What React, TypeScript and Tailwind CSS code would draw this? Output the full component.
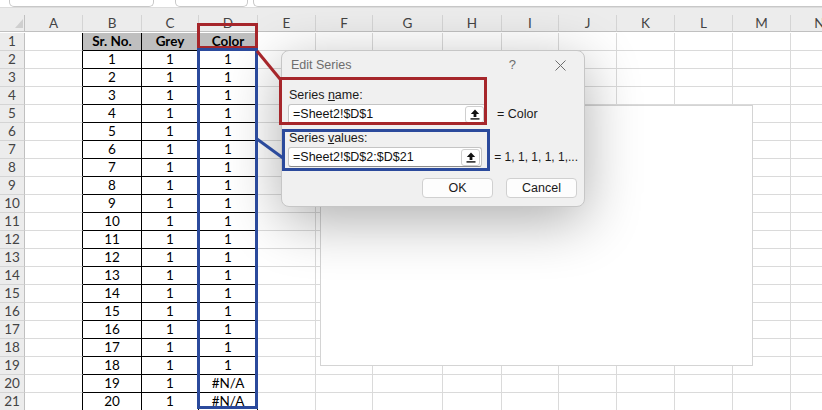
const COLS = ['A', 'B', 'C', 'D', 'E', 'F', 'G', 'H', 'I', 'J', 'K', 'L', 'M', 'N'];
const ROWS = Array.from({ length: 21 }, (_, i) => i + 1);

function cellValue(r: number, c: string) {
  if (r === 1) {
    if (c === 'B') return 'Sr. No.';
    if (c === 'C') return 'Grey';
    if (c === 'D') return 'Color';
    return '';
  }
  if (c === 'B') return String(r - 1);
  if (c === 'C') return '1';
  if (c === 'D') return r - 1 > 18 ? '#N/A' : '1';
  return '';
}

function cellClass(r: number, c: string) {
  if (c === 'B' || c === 'C' || c === 'D') {
    return r === 1
      ? 'flex items-center justify-center border-r border-b border-black bg-[#bfbfbf] font-bold'
      : 'flex items-center justify-center border-r border-b border-black bg-white';
  }
  if (c === 'A') return 'border-r border-b border-r-black border-b-[#dadada]';
  if (r === 1 && (c === 'G' || c === 'H')) return 'border-r border-b border-r-[#dadada] border-b-[#3a3a3a]';
  return 'border-r border-b border-[#dadada]';
}

function UploadIcon() {
  return (
    <svg width="10" height="11" viewBox="0 0 10 11">
      <path d="M5 0.5 L0.8 5 H3.6 V8 H6.4 V5 H9.2 Z" fill="#111" />
      <rect x="0.5" y="9.2" width="9" height="1.4" fill="#111" />
    </svg>
  );
}

function RefInput({ value }: { value: string }) {
  return (
    <div className="flex h-[20px] w-[198px] items-center rounded-[3px] border border-[#c4c4c4] border-b-[#8a8a8a] bg-white">
      <span className="flex-1 pl-[4px] text-[12.5px] leading-[18px] text-[#111]">{value}</span>
      <div className="mr-[1px] flex h-[17px] w-[19px] items-center justify-center rounded-[3px] border border-[#cfcfcf] bg-white">
        <UploadIcon />
      </div>
    </div>
  );
}

export default function App() {
  return (
    <div
      className="relative h-[410px] w-[822px] overflow-hidden bg-white text-black"
      style={{ fontFamily: 'Lato, "Liberation Sans", sans-serif' }}
    >
      {/* formula bar remnants */}
      <div className="flex h-[7px] items-end">
        <div className="ml-[9px] h-[7px] w-[145px] rounded-b-[5px] border border-t-0 border-[#c8c8c8]" />
        <div className="ml-[21px] h-[7px] w-[73px] rounded-b-[5px] border border-t-0 border-[#c8c8c8]" />
        <div className="ml-[5px] h-[7px] flex-1 rounded-bl-[5px] border border-t-0 border-r-0 border-[#c8c8c8]" />
      </div>
      <div className="h-[8px] border-t border-[#dcdcdc] bg-[#ececec]" />

      {/* sheet */}
      <div className="grid w-[849px] grid-cols-[25px_58px_59px_57px_59px_58px_57px_70px_59px_57px_58px_58px_58px_58px_58px] auto-rows-[18px] text-[13.5px]">
        <div className="relative h-[17px] border-r border-b border-[#c0c0c0] bg-[#ececec]">
          <svg className="absolute left-0 top-0" width="25" height="17">
            <polygon points="15,13 23,13 23,4" fill="#cfcfcf" />
          </svg>
        </div>
        {COLS.map((c) => (
          <div
            key={c}
            className="flex h-[17px] items-center justify-center border-r border-b border-r-[#d4d4d4] border-b-[#c0c0c0] bg-[#ececec] text-[13.5px] text-[#444]"
          >
            {c}
          </div>
        ))}
        {ROWS.map((r) => (
          <div key={r} className="contents">
            <div className="flex items-center justify-center border-r border-b border-r-[#c0c0c0] border-b-[#d4d4d4] bg-[#ececec] text-[#444]">
              {r}
            </div>
            {COLS.map((c) => (
              <div key={c} className={cellClass(r, c)}>
                {cellValue(r, c)}
              </div>
            ))}
          </div>
        ))}
      </div>

      {/* chart object */}
      <div className="absolute left-[320px] top-[105px] h-[261px] w-[433px] border border-[#d4d4d4] bg-white" />

      {/* Edit Series dialog */}
      <div
        className="absolute left-[281px] top-[50px] h-[157px] w-[304px] rounded-[8px] border border-[#c6c6c6] bg-[#f0f0f0] shadow-[0_14px_56px_rgba(0,0,0,0.32)]"
        style={{ fontFamily: '"Liberation Sans", Arial, sans-serif' }}
      >
        <div className="flex h-[28px] items-center pl-[9px] text-[12.5px] text-[#6d6d6d]">
          <span className="flex-1">Edit Series</span>
          <span className="mr-[39px] text-[13px]">?</span>
          <svg className="mr-[18px]" width="11" height="11" viewBox="0 0 11 11">
            <path d="M0.5 0.5 L10.5 10.5 M10.5 0.5 L0.5 10.5" stroke="#6d6d6d" strokeWidth="1" />
          </svg>
        </div>
        <div className="px-[6px] text-[12.5px] text-[#1a1a1a]">
          <div className="mt-[9px] h-[14px] pl-[1px] leading-[14px]">
            Series <span className="underline">n</span>ame:
          </div>
          <div className="mt-[2px] flex items-center">
            <RefInput value="=Sheet2!$D$1" />
            <span className="ml-[11px] whitespace-nowrap">= Color</span>
          </div>
          <div className="mt-[7px] h-[14px] pl-[1px] leading-[14px]">
            Series <span className="underline">v</span>alues:
          </div>
          <div className="mt-[2px] flex items-center">
            <RefInput value="=Sheet2!$D$2:$D$21" />
            <span className="ml-[12px] whitespace-nowrap text-[12px]">= 1, 1, 1, 1, 1,...</span>
          </div>
          <div className="mt-[11px] flex justify-end gap-[13px] pr-[1px]">
            <button className="h-[20px] w-[71px] rounded-[4px] border border-[#d0d0d0] bg-[#fdfdfd] text-[12.5px]">OK</button>
            <button className="h-[20px] w-[71px] rounded-[4px] border border-[#d0d0d0] bg-[#fdfdfd] text-[12.5px]">Cancel</button>
          </div>
        </div>
      </div>

      {/* annotations */}
      <div className="absolute left-[197px] top-[23px] h-[26px] w-[61px] border-[3px] border-[#a6262b]" />
      <div className="absolute left-[197px] top-[48px] h-[361px] w-[61px] border-[3px] border-[#2b4a9c]" />
      <div className="absolute left-[279px] top-[77px] h-[48px] w-[208px] border-[3px] border-[#a6262b]" />
      <div className="absolute left-[282px] top-[129px] h-[42px] w-[208px] border-[3px] border-[#2b4a9c]" />
      <svg className="pointer-events-none absolute left-0 top-0" width="822" height="410">
        <line x1="257" y1="51" x2="280" y2="79" stroke="#a6262b" strokeWidth="3" />
        <line x1="257" y1="139" x2="283" y2="158" stroke="#2b4a9c" strokeWidth="3" />
      </svg>
    </div>
  );
}
